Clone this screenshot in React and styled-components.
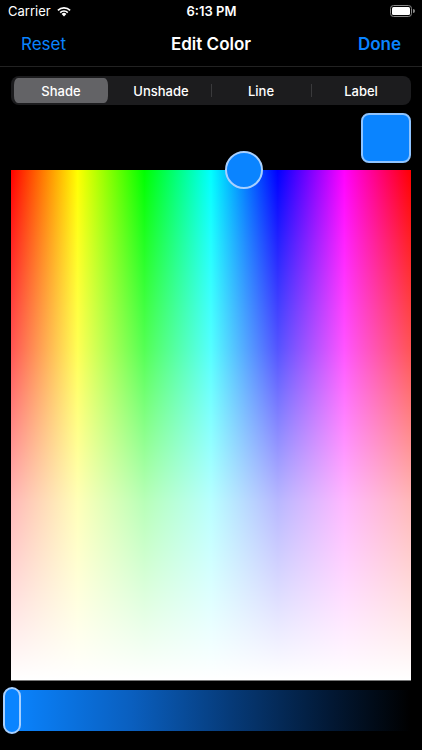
import React from "react";
import styled, { createGlobalStyle } from "styled-components";

const Global = createGlobalStyle`
  html, body { margin: 0; padding: 0; background: #000; }
  body { font-family: Inter, "Liberation Sans", Arial, sans-serif; -webkit-font-smoothing: antialiased; }
`;

const Screen = styled.div`
  width: 422px;
  height: 750px;
  background: #000;
  color: #fff;
  display: flex;
  flex-direction: column;
  overflow: hidden;
`;

const StatusBar = styled.div`
  height: 22px;
  display: grid;
  grid-template-columns: 1fr auto 1fr;
  align-items: center;
  padding: 0 7px 0 8px;
  font-size: 13px;
  font-weight: 400;
`;

const StatusLeft = styled.div`
  display: flex;
  align-items: center;
  gap: 5px;
`;

const StatusTime = styled.div`
  font-weight: 600;
`;

const StatusRight = styled.div`
  display: flex;
  justify-content: flex-end;
`;

const NavBar = styled.div`
  height: 44px;
  display: grid;
  grid-template-columns: 1fr auto 1fr;
  align-items: center;
  padding: 0 21px;
  border-bottom: 1px solid #222;
`;

const NavButton = styled.div`
  color: #0a84ff;
  font-size: 17px;
  font-weight: ${(p) => (p.$bold ? 600 : 400)};
  justify-self: ${(p) => (p.$right ? "end" : "start")};
`;

const NavTitle = styled.div`
  font-size: 17px;
  font-weight: 600;
`;

const Segmented = styled.div`
  margin: 9px 11px 0;
  height: 29px;
  border-radius: 8px;
  background: #1c1c1e;
  display: flex;
  align-items: center;
`;

const Segment = styled.div`
  flex: 1;
  height: 25px;
  display: flex;
  align-items: center;
  justify-content: center;
  font-size: 13px;
  font-weight: 500;
  border-radius: 7px;
  padding: 0 3px;
  background: ${(p) => (p.$active ? "#636366" : "transparent")};
  background-clip: content-box;
  position: relative;
  &::before {
    content: "";
    display: ${(p) => (p.$divider ? "block" : "none")};
    position: absolute;
    left: 0;
    top: 6px;
    height: 13px;
    width: 1px;
    background: #3a3a3c;
  }
`;

const SegmentLabel = styled.span`
  position: absolute;
`;

const SwatchRow = styled.div`
  display: flex;
  justify-content: flex-end;
  padding: 8px 11px 0;
`;

const Swatch = styled.div`
  width: 50px;
  height: 50px;
  box-sizing: border-box;
  border-radius: 8px;
  border: 2px solid #8fc4ff;
  background: #0a84ff;
`;

const PickerArea = styled.div`
  margin: 7px 11px 0;
  height: 511px;
  position: relative;
  box-sizing: border-box;
  border-bottom: 1px solid #777;
  background:
    linear-gradient(to bottom, rgba(255,255,255,0) 0%, rgba(255,255,255,0.33) 35%, rgba(255,255,255,0.72) 65%, #fff 100%),
    linear-gradient(to right, #ff0000 0%, #ffff00 16.67%, #00ff00 33.33%, #00ffff 50%, #0000ff 66.67%, #ff00ff 83.33%, #ff0000 100%);
`;

const Knob = styled.div`
  position: absolute;
  width: 38px;
  height: 38px;
  box-sizing: border-box;
  border-radius: 50%;
  border: 2px solid #a8d0ff;
  background: #0a84ff;
  transform: translate(-50%, -50%);
`;

const SliderRow = styled.div`
  margin: 6px 11px 0 3px;
  height: 47px;
  display: flex;
  align-items: center;
  position: relative;
`;

const Track = styled.div`
  flex: 1;
  margin-left: 8px;
  height: 41px;
  background: linear-gradient(to right, #0a84ff 0%, #0a5fbf 30%, #063a78 55%, #021834 80%, #000 100%);
`;

const SliderThumb = styled.div`
  position: absolute;
  left: 0;
  top: 0;
  width: 18px;
  height: 47px;
  box-sizing: border-box;
  border-radius: 9px;
  border: 2px solid #a8d0ff;
  background: #0a84ff;
`;

const Wifi = () => (
  <svg width="16" height="12" viewBox="0 0 16 12">
    <path d="M8 11.5 L5.6 9 A3.4 3.4 0 0 1 10.4 9 Z" fill="#fff" />
    <path d="M3.6 7 A6.2 6.2 0 0 1 12.4 7 L11.2 8.2 A4.5 4.5 0 0 0 4.8 8.2 Z" fill="#fff" />
    <path d="M1.3 4.7 A9.5 9.5 0 0 1 14.7 4.7 L13.5 5.9 A7.8 7.8 0 0 0 2.5 5.9 Z" fill="#fff" />
  </svg>
);

const Battery = () => (
  <svg width="25" height="12" viewBox="0 0 25 12">
    <rect x="0.5" y="0.5" width="21" height="11" rx="3" fill="none" stroke="#888" />
    <rect x="2" y="2" width="18" height="8" rx="1.5" fill="#fff" />
    <path d="M23 4 A2 2 0 0 1 23 8 Z" fill="#888" />
  </svg>
);

const segments = [
  { label: "Shade", active: true },
  { label: "Unshade" },
  { label: "Line", divider: true },
  { label: "Label", divider: true },
];

export default function App() {
  return (
    <Screen>
      <Global />
      <StatusBar>
        <StatusLeft>
          <span>Carrier</span>
          <Wifi />
        </StatusLeft>
        <StatusTime>6:13 PM</StatusTime>
        <StatusRight>
          <Battery />
        </StatusRight>
      </StatusBar>
      <NavBar>
        <NavButton>Reset</NavButton>
        <NavTitle>Edit Color</NavTitle>
        <NavButton $right $bold>Done</NavButton>
      </NavBar>
      <Segmented>
        {segments.map((s) => (
          <Segment key={s.label} $active={s.active} $divider={s.divider}>
            <SegmentLabel>{s.label}</SegmentLabel>
          </Segment>
        ))}
      </Segmented>
      <SwatchRow>
        <Swatch />
      </SwatchRow>
      <PickerArea>
        <Knob style={{ left: "58.25%", top: 0 }} />
      </PickerArea>
      <SliderRow>
        <Track />
        <SliderThumb />
      </SliderRow>
    </Screen>
  );
}
